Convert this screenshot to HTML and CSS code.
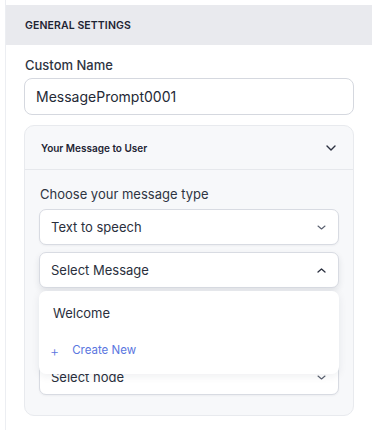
FILE: index.html
```html
<!DOCTYPE html>
<html lang="en">
<head>
    <meta charset="UTF-8">
    <meta name="viewport" content="width=device-width, initial-scale=1.0">
    <title>General Settings</title>
    <link rel="stylesheet" href="styles.css">
</head>
<body>
    <section class="panel">
        <div class="panel-head">GENERAL SETTINGS</div>

        <div class="panel-body">
            <label class="field-label">Custom Name</label>
            <div class="text-input">MessagePrompt0001</div>

            <div class="accordion">
                <div class="accordion-head">
                    <span>Your Message to User</span>
                    <svg class="chev" width="10" height="6" viewBox="0 0 10 6"><path d="M1 1l4 4 4-4" fill="none" stroke="#2c3140" stroke-width="1.4" stroke-linecap="round" stroke-linejoin="round"/></svg>
                </div>

                <div class="accordion-body">
                    <label class="field-label small">Choose your message type</label>

                    <div class="select">
                        <span>Text to speech</span>
                        <svg width="9" height="5" viewBox="0 0 9 5"><path d="M1 1l3.5 3 3.5-3" fill="none" stroke="#5b6170" stroke-width="1.1" stroke-linecap="round" stroke-linejoin="round"/></svg>
                    </div>

                    <div class="select-wrap">
                        <div class="select open">
                            <span>Select Message</span>
                            <svg width="9" height="5" viewBox="0 0 9 5"><path d="M1 4l3.5-3 3.5 3" fill="none" stroke="#2c3140" stroke-width="1.3" stroke-linecap="round" stroke-linejoin="round"/></svg>
                        </div>
                        <div class="menu">
                            <div class="menu-item">Welcome</div>
                            <div class="menu-item create"><span class="plus">+</span>Create New</div>
                        </div>
                    </div>

                    <div class="select node">
                        <span>Select node</span>
                        <svg width="9" height="5" viewBox="0 0 9 5"><path d="M1 1l3.5 3 3.5-3" fill="none" stroke="#5b6170" stroke-width="1.1" stroke-linecap="round" stroke-linejoin="round"/></svg>
                    </div>
                </div>
            </div>
        </div>
    </section>
</body>
</html>
```

FILE: styles.css
```css
* {
    margin: 0;
    padding: 0;
    box-sizing: border-box;
}

body {
    background-color: white;
    font-family: Inter, "Noto Sans", sans-serif;
    color: #2a2f3c;
}

.panel {
    margin-left: 5px;
    border-left: 1px solid #eceef2;
    min-height: 430px;
    padding-top: 5px;
}

.panel-head {
    height: 40px;
    display: flex;
    align-items: center;
    padding-left: 19px;
    background-color: #e9eaee;
    font-size: 10.5px;
    font-weight: 600;
    color: #1e2433;
    letter-spacing: 0.1px;
}

.panel-body {
    padding: 12px 18px 0 18px;
}

.field-label {
    display: block;
    font-size: 13px;
    font-weight: 500;
    color: #2e3442;
    margin-left: 1px;
}

.field-label.small {
    font-weight: 400;
    margin-left: 1px;
    margin-bottom: 7px;
}

.text-input {
    margin-top: 5px;
    height: 37px;
    border: 1px solid #d5d8df;
    border-radius: 8px;
    padding-left: 11px;
    display: flex;
    align-items: center;
    font-size: 14px;
    color: #242936;
}

.accordion {
    margin-top: 10px;
    background-color: #f7f8fa;
    border: 1px solid #e8eaee;
    border-radius: 10px;
}

.accordion-head {
    height: 44px;
    display: flex;
    align-items: center;
    justify-content: space-between;
    padding: 0 17px 0 16px;
    border-bottom: 1px solid #e6e8ec;
    font-size: 10px;
    font-weight: 600;
    color: #1e2433;
}

.accordion-body {
    padding: 16px 14px 20px 14px;
}

.select {
    height: 36px;
    background-color: white;
    border: 1px solid #d8dbe2;
    border-radius: 7px;
    display: flex;
    align-items: center;
    justify-content: space-between;
    padding: 0 12px 0 11px;
    font-size: 13px;
    color: #2a2f3c;
    box-shadow: 0 1px 2px rgba(30, 40, 60, 0.05);
}

.select-wrap {
    position: relative;
    margin-top: 7px;
}

.select.open {
    box-shadow: 0 3px 6px rgba(30, 40, 60, 0.10);
}

.select.node {
    margin-top: 71px;
}

/* the open list lies over the fields below it */
.menu {
    position: absolute;
    top: 39px;
    left: 0;
    right: 0;
    height: 83px;
    background-color: white;
    border-radius: 7px;
    box-shadow: 0 2px 8px rgba(30, 40, 60, 0.08);
    z-index: 2;
    padding-top: 12px;
}

.menu-item {
    height: 20px;
    display: flex;
    align-items: center;
    padding-left: 14px;
    font-size: 13px;
    color: #2a2f3c;
}

.menu-item.create {
    margin-top: 17px;
    padding-left: 11px;
    font-size: 11.5px;
    color: #5a76e0;
}

.plus {
    font-size: 14px;
    margin-right: 13px;
    font-weight: 300;
}
```
